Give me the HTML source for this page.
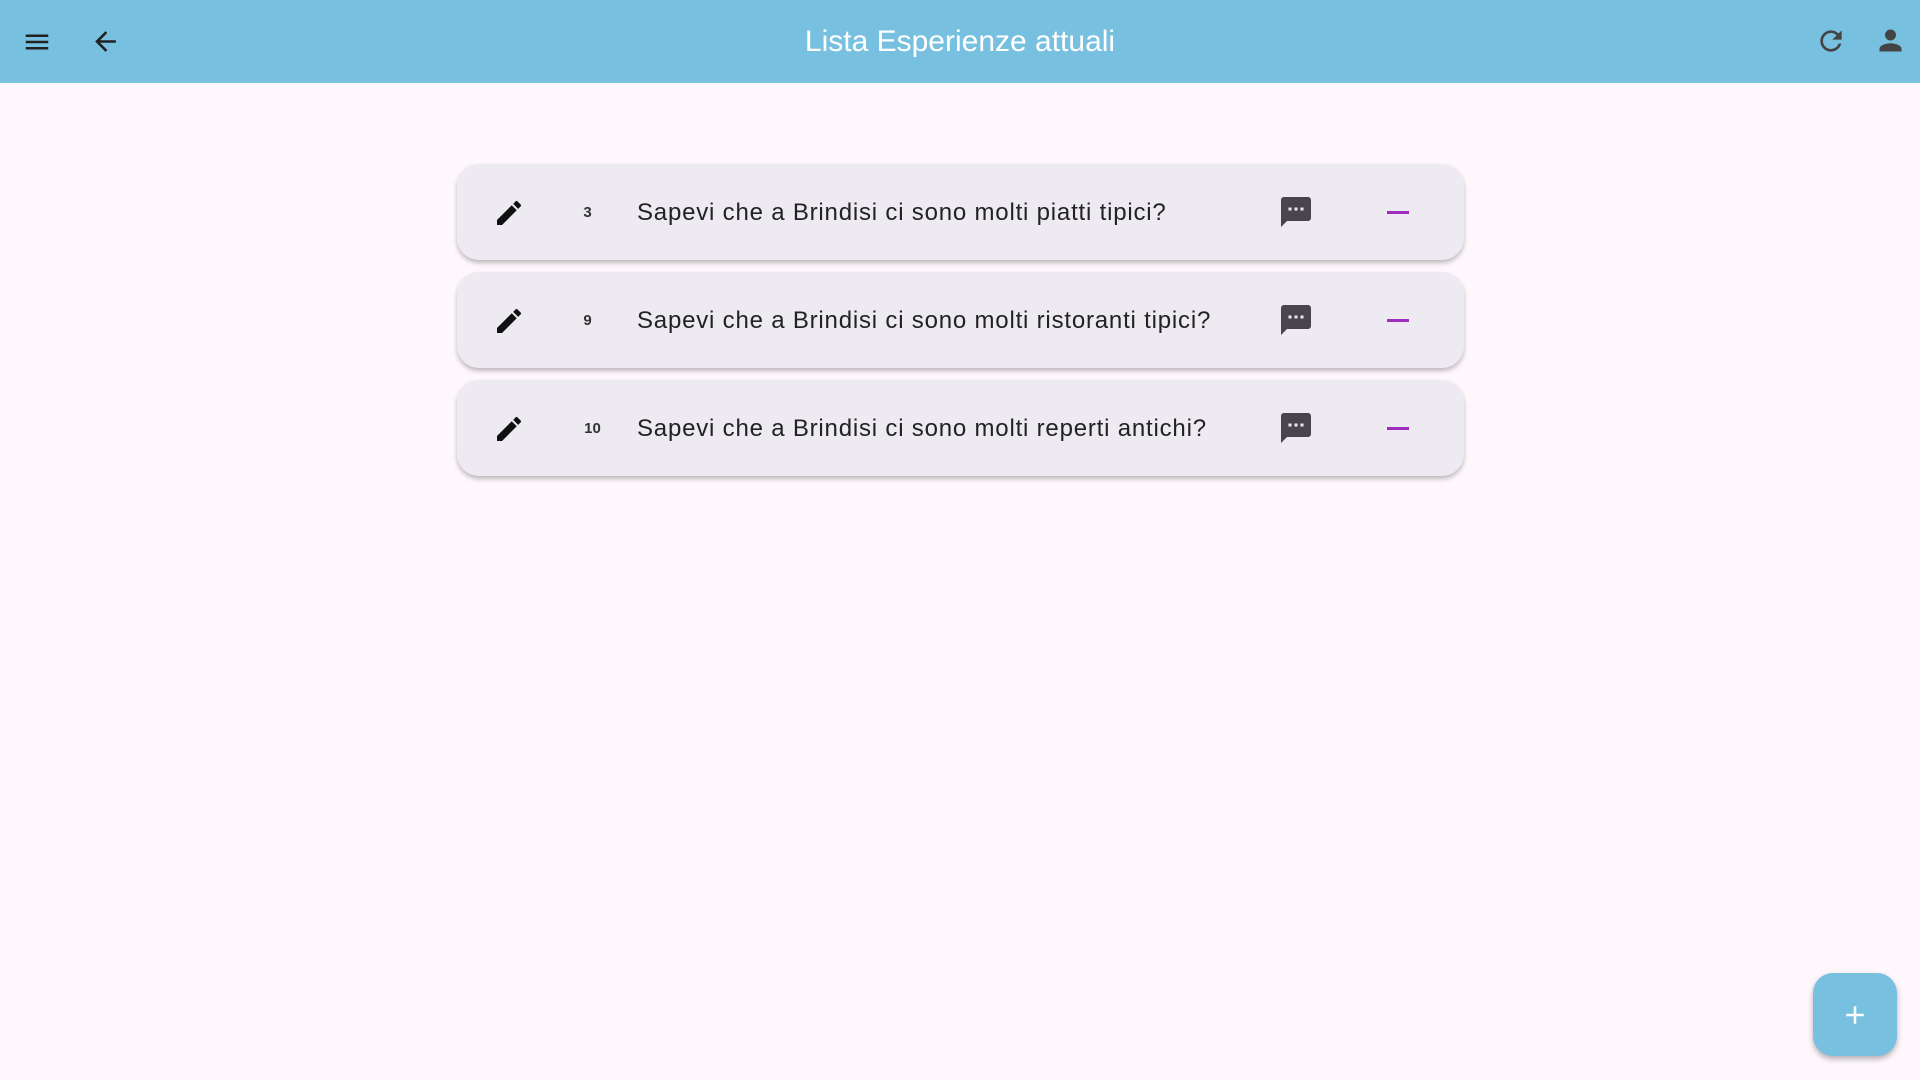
<!DOCTYPE html>
<html><head><meta charset="utf-8"><style>
body{margin:0;width:1920px;height:1080px;background:#fef8fd;font-family:"Liberation Sans",sans-serif;overflow:hidden;position:relative}
.hdr{position:absolute;left:0;top:0;width:1920px;height:83px;background:#78c0e0}
.title{position:absolute;left:0;width:1920px;top:25px;text-align:center;color:#fff;font-size:30px}
.ic{position:absolute}
.card{position:absolute;left:457px;width:1007px;height:96px;background:#eeeaf1;border-radius:22px;box-shadow:0 3px 5px rgba(0,0,0,.25)}
.card .num{position:absolute;left:108px;width:45px;text-align:center;top:40px;font-size:15px;color:#333;font-weight:bold}
.txt{position:absolute;left:180px;top:35px;font-size:24px;color:#222;letter-spacing:.8px}
.fab{position:absolute;left:1813px;top:973px;width:84px;height:83px;background:#78c0e0;border-radius:20px;box-shadow:0 3px 6px rgba(0,0,0,.3)}
</style></head><body>
<div class="hdr">
<svg class="ic" style="left:22px;top:27px" width="30" height="30" viewBox="0 0 24 24"><path d="M3 18h18v-2H3v2zm0-5h18v-2H3v2zm0-7v2h18V6H3z" fill="#222"/></svg>
<svg class="ic" style="left:90px;top:26px" width="31" height="31" viewBox="0 0 24 24"><path d="M20 11H7.83l5.59-5.59L12 4l-8 8 8 8 1.41-1.41L7.83 13H20v-2z" fill="#222"/></svg>
<div class="title">Lista Esperienze attuali</div>
<svg class="ic" style="left:1815px;top:25px" width="32" height="32" viewBox="0 0 24 24"><path d="M17.65 6.35A7.958 7.958 0 0 0 12 4c-4.42 0-7.99 3.58-7.99 8s3.57 8 7.99 8c3.73 0 6.84-2.55 7.73-6h-2.08A5.99 5.99 0 0 1 12 18c-3.31 0-6-2.69-6-6s2.69-6 6-6c1.66 0 3.14.69 4.22 1.78L13 11h7V4l-2.35 2.35z" fill="#444"/></svg>
<svg class="ic" style="left:1874px;top:24px" width="33" height="33" viewBox="0 0 24 24"><path d="M12 12c2.21 0 4-1.79 4-4s-1.79-4-4-4-4 1.79-4 4 1.79 4 4 4zm0 2c-2.67 0-8 1.34-8 4v2h16v-2c0-2.66-5.33-4-8-4z" fill="#444"/></svg>
</div>

<div class="card" style="top:164px">
<svg class="ic" style="left:36px;top:33px" width="32" height="32" viewBox="0 0 24 24"><path d="M3 17.25V21h3.75L17.81 9.94l-3.75-3.75L3 17.25zM20.71 7.04a1 1 0 000-1.41l-2.34-2.34a1 1 0 00-1.41 0l-1.83 1.830 3.75 3.75 1.83-1.83z" fill="#111"/></svg>
<div class="num">3</div><div class="txt">Sapevi che a Brindisi ci sono molti piatti tipici?</div>
<svg class="ic" style="left:821px;top:30px" width="36" height="36" viewBox="0 0 24 24"><path d="M20 2H4c-1.1 0-2 .9-2 2v18l4-4h14c1.1 0 2-.9 2-2V4c0-1.1-.9-2-2-2zM9 11H7V9h2v2zm4 0h-2V9h2v2zm4 0h-2V9h2v2z" fill="#49454f"/></svg>
<div class="ic" style="left:930px;top:47px;width:22px;height:3px;background:#a12dc0"></div>
</div>
<div class="card" style="top:272px">
<svg class="ic" style="left:36px;top:33px" width="32" height="32" viewBox="0 0 24 24"><path d="M3 17.25V21h3.75L17.81 9.94l-3.75-3.75L3 17.25zM20.71 7.04a1 1 0 000-1.41l-2.34-2.34a1 1 0 00-1.41 0l-1.83 1.83 3.75 3.75 1.83-1.83z" fill="#111"/></svg>
<div class="num">9</div><div class="txt">Sapevi che a Brindisi ci sono molti ristoranti tipici?</div>
<svg class="ic" style="left:821px;top:30px" width="36" height="36" viewBox="0 0 24 24"><path d="M20 2H4c-1.1 0-2 .9-2 2v18l4-4h14c1.1 0 2-.9 2-2V4c0-1.1-.9-2-2-2zM9 11H7V9h2v2zm4 0h-2V9h2v2zm4 0h-2V9h2v2z" fill="#49454f"/></svg>
<div class="ic" style="left:930px;top:47px;width:22px;height:3px;background:#a12dc0"></div>
</div>
<div class="card" style="top:380px">
<svg class="ic" style="left:36px;top:33px" width="32" height="32" viewBox="0 0 24 24"><path d="M3 17.25V21h3.75L17.81 9.94l-3.75-3.75L3 17.25zM20.71 7.04a1 1 0 000-1.41l-2.34-2.34a1 1 0 00-1.41 0l-1.83 1.83 3.75 3.75 1.83-1.83z" fill="#111"/></svg>
<div class="num" style="left:113px">10</div><div class="txt">Sapevi che a Brindisi ci sono molti reperti antichi?</div>
<svg class="ic" style="left:821px;top:30px" width="36" height="36" viewBox="0 0 24 24"><path d="M20 2H4c-1.1 0-2 .9-2 2v18l4-4h14c1.1 0 2-.9 2-2V4c0-1.1-.9-2-2-2zM9 11H7V9h2v2zm4 0h-2V9h2v2zm4 0h-2V9h2v2z" fill="#49454f"/></svg>
<div class="ic" style="left:930px;top:47px;width:22px;height:3px;background:#a12dc0"></div>
</div>

<div class="fab"><svg class="ic" style="left:27px;top:27px" width="30" height="30" viewBox="0 0 24 24"><path d="M19 13h-6v6h-2v-6H5v-2h6V5h2v6h6v2z" fill="#fff"/></svg></div>
</body></html>
